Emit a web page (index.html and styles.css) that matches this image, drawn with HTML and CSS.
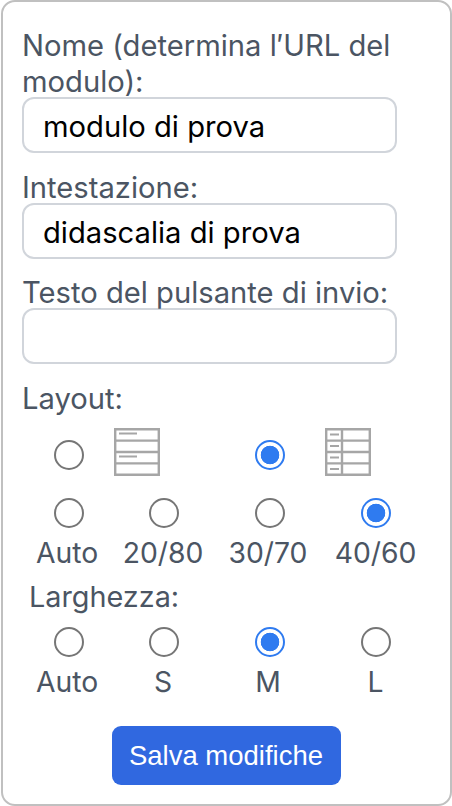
FILE: index.html
```html
<!DOCTYPE html>
<html lang="it">

<head>
  <meta charset="UTF-8">
  <meta name="viewport" content="width=device-width, initial-scale=1.0">
  <title>Impostazioni modulo</title>
  <link rel="stylesheet" href="styles.css">
</head>

<body>
  <form class="card">
    <label class="field-label" for="nome">Nome (determina l′URL del modulo):</label>
    <input class="text-input" id="nome" type="text" value="modulo di prova">

    <label class="field-label" for="intestazione">Intestazione:</label>
    <input class="text-input" id="intestazione" type="text" value="didascalia di prova">

    <label class="field-label" for="pulsante">Testo del pulsante di invio:</label>
    <input class="text-input" id="pulsante" type="text">

    <div class="field-label">Layout:</div>
    <div class="option-grid layout-row">
      <input class="radio" type="radio" name="layout">
      <svg class="layout-icon" width="46" height="48" viewBox="0 0 46 48">
        <path class="icon-frame" d="M1.2 1.2H44.8V46.8H1.2ZM1.2 12.6H44.8M1.2 24H44.8M1.2 35.400H44.8" />
        <path class="icon-line" d="M5 5.500H23M5 28.500H23" />
      </svg>
      <input class="radio" type="radio" name="layout" checked>
      <svg class="layout-icon" width="46" height="48" viewBox="0 0 46 48">
        <path class="icon-frame" d="M1.2 1.2H44.8V46.8H1.2ZM1.2 12.6H44.8M1.2 24H44.8M1.2 35.400H44.8M17 1.2V46.800" />
        <path class="icon-line" d="M5 6.500H14M5 18H14M5 29.500H14M5 41H14" />
      </svg>
    </div>

    <div class="option-grid ratio-row">
      <label class="option"><input class="radio" type="radio" name="ratio">Auto</label>
      <label class="option"><input class="radio" type="radio" name="ratio">20/80</label>
      <label class="option"><input class="radio" type="radio" name="ratio">30/70</label>
      <label class="option"><input class="radio" type="radio" name="ratio" checked>40/60</label>
    </div>

    <div class="field-label width-label">Larghezza:</div>
    <div class="option-grid">
      <label class="option"><input class="radio" type="radio" name="width">Auto</label>
      <label class="option"><input class="radio" type="radio" name="width">S</label>
      <label class="option"><input class="radio" type="radio" name="width" checked>M</label>
      <label class="option"><input class="radio" type="radio" name="width">L</label>
    </div>

    <div class="actions">
      <button class="save-button" type="button">Salva modifiche</button>
    </div>
  </form>
</body>

</html>
```

FILE: styles.css
```css
html,
body {
  margin: 0;
  padding: 0;
  height: 100%;
  background: #fff;
  font-family: Inter, "Noto Sans", sans-serif;
}

.card {
  box-sizing: border-box;
  width: 451px;
  height: 806px;
  margin-left: 1px;
  padding: 26px 20px 0 19px;
  border: 2px solid #c0c0c0;
  border-radius: 14px;
}

.field-label {
  display: block;
  margin-bottom: -3px;
  font-size: 29.2px;
  line-height: 36px;
  color: #4b5563;
}

.text-input {
  display: block;
  box-sizing: border-box;
  width: 375px;
  height: 56px;
  margin: 0 0 16.500px;
  padding: 3px 19px 0;
  border: 2px solid #d1d5db;
  border-radius: 12px;
  background: #fff;
  font-family: inherit;
  font-size: 29.2px;
  color: #000;
  outline: none;
}

.option-grid {
  display: grid;
  grid-template-columns: 90px 102px 108px 110px;
}

.layout-row {
  align-items: center;
  margin-top: 14.500px;
}

.layout-row .radio {
  justify-self: center;
  margin: 6px 0 0 4px;
}

.layout-icon {
  display: block;
  margin-left: 2px;
}

.layout-row .layout-icon:last-child {
  margin-left: 3px;
}

.icon-frame {
  fill: none;
  stroke: #a6a6a6;
  stroke-width: 2.4;
}

.icon-line {
  fill: none;
  stroke: #a6a6a6;
  stroke-width: 2;
}

.ratio-row {
  margin-top: 22px;
}

.width-label {
  margin: 8px 0 12px 7px;
  font-size: 28.800px;
}

.option {
  display: flex;
  flex-direction: column;
  align-items: center;
  gap: 7px;
  font-size: 28.300px;
  line-height: 36px;
  color: #4b5563;
}

.option .radio {
  margin: 0 0 0 4px;
}

.option:nth-child(2) .radio {
  margin-left: 2px;
}

.option:nth-child(4) .radio {
  margin-left: 1px;
}

.option-grid .option:nth-child(4) {
  padding-right: 3px;
}

.radio {
  appearance: none;
  box-sizing: border-box;
  width: 30px;
  height: 30px;
  border: 2.700px solid #767676;
  border-radius: 50%;
  background: #fff;
}

.radio:checked {
  border-color: #2f7bf0;
  background: radial-gradient(circle, #2f7bf0 0 9px, #fff 9.6px);
}

.actions {
  display: flex;
  justify-content: center;
  margin-top: 26px;
}

.save-button {
  width: 229px;
  height: 59px;
  border: none;
  border-radius: 9px;
  background: #3068e0;
  color: #fff;
  font-family: "Liberation Sans", Arial, sans-serif;
  font-size: 27.500px;
}
```
